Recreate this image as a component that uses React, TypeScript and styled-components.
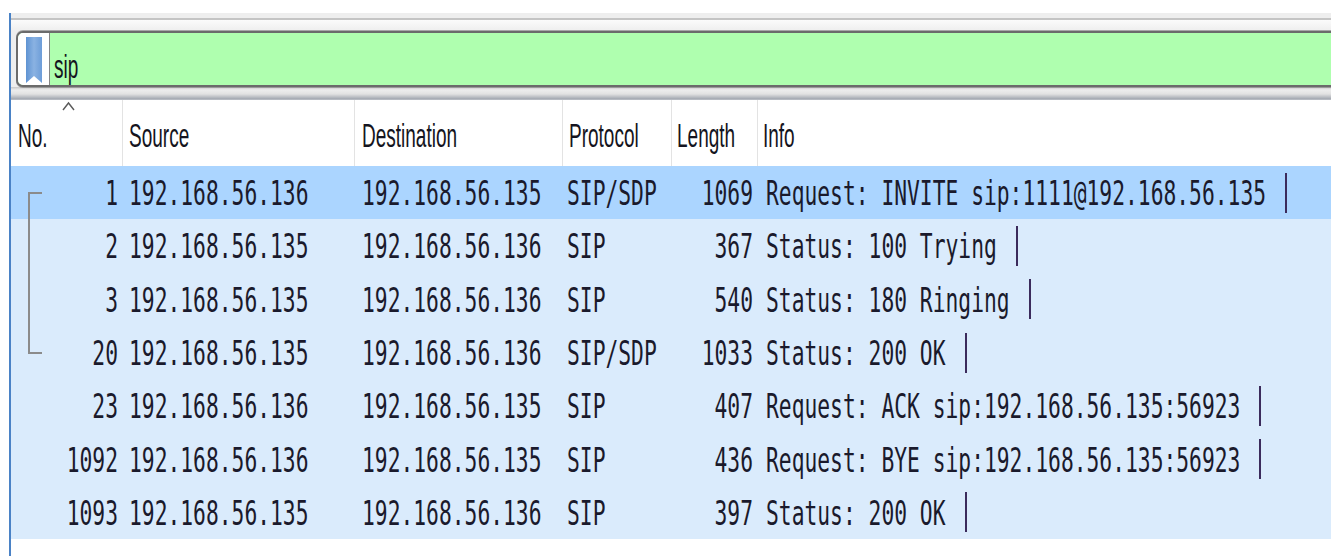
import React from "react";
import styled, { createGlobalStyle } from "styled-components";

const GlobalStyle = createGlobalStyle`
  html, body {
    margin: 0;
    padding: 0;
    background: #ffffff;
  }
  body {
    width: 1340px;
    height: 556px;
    overflow: hidden;
  }
`;

type Tree = "start" | "mid" | "end" | "none";

interface Packet {
  no: number;
  src: string;
  dst: string;
  proto: string;
  len: number;
  info: string;
  tree: Tree;
  selected?: boolean;
}

const packets: Packet[] = [
  { no: 1, src: "192.168.56.136", dst: "192.168.56.135", proto: "SIP/SDP", len: 1069, info: "Request: INVITE sip:1111@192.168.56.135", tree: "start", selected: true },
  { no: 2, src: "192.168.56.135", dst: "192.168.56.136", proto: "SIP", len: 367, info: "Status: 100 Trying", tree: "mid" },
  { no: 3, src: "192.168.56.135", dst: "192.168.56.136", proto: "SIP", len: 540, info: "Status: 180 Ringing", tree: "mid" },
  { no: 20, src: "192.168.56.135", dst: "192.168.56.136", proto: "SIP/SDP", len: 1033, info: "Status: 200 OK", tree: "end" },
  { no: 23, src: "192.168.56.136", dst: "192.168.56.135", proto: "SIP", len: 407, info: "Request: ACK sip:192.168.56.135:56923", tree: "none" },
  { no: 1092, src: "192.168.56.136", dst: "192.168.56.135", proto: "SIP", len: 436, info: "Request: BYE sip:192.168.56.135:56923", tree: "none" },
  { no: 1093, src: "192.168.56.135", dst: "192.168.56.136", proto: "SIP", len: 397, info: "Status: 200 OK", tree: "none" },
];

const COLUMNS = "112px 232px 208px 109px 86px 1fr";

const Page = styled.div`
  box-sizing: border-box;
  height: 556px;
  padding: 13px 9px 0 9px;
`;

const Frame = styled.div`
  height: 100%;
  border-left: 2px solid #4a82c6;
  display: flex;
  flex-direction: column;
`;

const Toolbar = styled.div`
  box-sizing: border-box;
  height: 87px;
  padding: 18px 0 0 5px;
  background: linear-gradient(
    to bottom,
    #eeeeee 0px,
    #eeeeee 5px,
    #c4c4c4 5px,
    #c4c4c4 7px,
    #fbfbfb 7px,
    #eeeeee 18px,
    #eeeeee 74px,
    #c8c8c8 74px,
    #ededed 77px,
    #e2e2e2 81px,
    #a2a7b0 86px,
    #c9ccd2 87px
  );
`;

const FilterBox = styled.div`
  box-sizing: border-box;
  height: 56px;
  display: flex;
  border: 2px solid #6b6b6b;
  border-right: none;
  border-radius: 7px 0 0 7px;
  background: #afffaf;
  overflow: hidden;
  box-shadow: 0 -1px 0 #a8a8a8, 0 1px 0 #9a9a9a;
`;

const BookmarkButton = styled.div`
  width: 31px;
  flex-shrink: 0;
  background: #ffffff;
  border-right: 1px solid #858585;
  display: flex;
  align-items: center;
  justify-content: center;
  padding-top: 1px;
`;

const FilterText = styled.div`
  display: flex;
  align-items: center;
  padding: 16px 0 0 4px;
  font-family: "Liberation Sans", Arial, sans-serif;
  font-size: 19px;
  color: #141420;
`;

const Stretch = styled.span<{ $sy: number }>`
  display: inline-block;
  white-space: pre;
  transform: scaleY(${(p) => p.$sy});
  transform-origin: 50% 50%;
`;

const Header = styled.div`
  display: grid;
  grid-template-columns: ${COLUMNS};
  height: 66px;
  background: #ffffff;
`;

const HeaderCell = styled.div<{ $pl: number; $last?: boolean }>`
  position: relative;
  display: flex;
  align-items: center;
  padding: 5px 0 0 ${(p) => p.$pl}px;
  border-right: ${(p) => (p.$last ? "none" : "1px solid #e3e3e3")};
  font-family: "Liberation Sans", Arial, sans-serif;
  font-size: 19px;
  color: #141420;
`;

const SortArrow = styled.svg`
  position: absolute;
  top: 1px;
  left: 51px;
`;

const Rows = styled.div`
  display: flex;
  flex-direction: column;
`;

const Row = styled.div<{ $selected?: boolean }>`
  display: grid;
  grid-template-columns: ${COLUMNS};
  height: 53.3px;
  background: ${(p) => (p.$selected ? "#abd5ff" : "#daebfc")};
  font-family: "DejaVu Sans Mono", "Liberation Mono", monospace;
  font-size: 21.3px;
  color: #1a1a2c;
`;

const NoCell = styled.div`
  display: flex;
  justify-content: space-between;
  align-items: center;
  padding: 0 5px 0 17px;
`;

const TreeMark = styled.div<{ $kind: Tree }>`
  align-self: stretch;
  width: 14px;
  flex-shrink: 0;
  background-repeat: no-repeat;
  ${({ $kind }) => {
    const line = "linear-gradient(#8b8b8b, #8b8b8b)";
    if ($kind === "start")
      return `background-image: ${line}, ${line};
        background-position: 0 100%, 0 26px;
        background-size: 2px calc(100% - 26px), 14px 2px;`;
    if ($kind === "mid")
      return `background-image: ${line};
        background-position: 0 0;
        background-size: 2px 100%;`;
    if ($kind === "end")
      return `background-image: ${line}, ${line};
        background-position: 0 0, 0 26px;
        background-size: 2px 28px, 14px 2px;`;
    return "";
  }}
`;

const Cell = styled.div<{ $pl?: number; $pr?: number; $right?: boolean }>`
  display: flex;
  align-items: center;
  justify-content: ${(p) => (p.$right ? "flex-end" : "flex-start")};
  padding-left: ${(p) => p.$pl ?? 0}px;
  padding-right: ${(p) => p.$pr ?? 0}px;
  white-space: pre;
  overflow: hidden;
`;

const Marker = styled.span`
  display: inline-block;
  width: 2px;
  height: 40px;
  margin-left: 19px;
  background: #3b2b5c;
  flex-shrink: 0;
`;

const MONO_SY = 1.6;
const SANS_SY = 1.75;

const Bookmark = () => (
  <svg width="16" height="46" viewBox="0 0 16 46">
    <defs>
      <linearGradient id="rib" x1="0" x2="1" y1="0" y2="0">
        <stop offset="0" stopColor="#5f93d2" />
        <stop offset="0.5" stopColor="#8ab2e2" />
        <stop offset="1" stopColor="#6d9dd8" />
      </linearGradient>
    </defs>
    <polygon points="0,0 16,0 16,46 8,39 0,46" fill="url(#rib)" />
  </svg>
);

export default function App() {
  return (
    <>
      <GlobalStyle />
      <Page>
        <Frame>
          <Toolbar>
            <FilterBox>
              <BookmarkButton>
                <Bookmark />
              </BookmarkButton>
              <FilterText>
                <Stretch $sy={SANS_SY}>sip</Stretch>
              </FilterText>
            </FilterBox>
          </Toolbar>
          <Header>
            <HeaderCell $pl={7}>
              <SortArrow width="13" height="10" viewBox="0 0 13 10">
                <polyline points="1,9 6.5,2 12,9" fill="none" stroke="#5a5a5a" strokeWidth="1.4" />
              </SortArrow>
              <Stretch $sy={SANS_SY}>No.</Stretch>
            </HeaderCell>
            <HeaderCell $pl={6}>
              <Stretch $sy={SANS_SY}>Source</Stretch>
            </HeaderCell>
            <HeaderCell $pl={7}>
              <Stretch $sy={SANS_SY}>Destination</Stretch>
            </HeaderCell>
            <HeaderCell $pl={6}>
              <Stretch $sy={SANS_SY}>Protocol</Stretch>
            </HeaderCell>
            <HeaderCell $pl={5}>
              <Stretch $sy={SANS_SY}>Length</Stretch>
            </HeaderCell>
            <HeaderCell $pl={5} $last>
              <Stretch $sy={SANS_SY}>Info</Stretch>
            </HeaderCell>
          </Header>
          <Rows>
            {packets.map((p) => (
              <Row key={p.no} $selected={p.selected}>
                <NoCell>
                  <TreeMark $kind={p.tree} />
                  <Stretch $sy={MONO_SY}>{p.no}</Stretch>
                </NoCell>
                <Cell $pl={6}>
                  <Stretch $sy={MONO_SY}>{p.src}</Stretch>
                </Cell>
                <Cell $pl={7}>
                  <Stretch $sy={MONO_SY}>{p.dst}</Stretch>
                </Cell>
                <Cell $pl={4}>
                  <Stretch $sy={MONO_SY}>{p.proto}</Stretch>
                </Cell>
                <Cell $pr={5} $right>
                  <Stretch $sy={MONO_SY}>{p.len}</Stretch>
                </Cell>
                <Cell $pl={8}>
                  <Stretch $sy={MONO_SY}>{p.info}</Stretch>
                  <Marker />
                </Cell>
              </Row>
            ))}
          </Rows>
        </Frame>
      </Page>
    </>
  );
}
